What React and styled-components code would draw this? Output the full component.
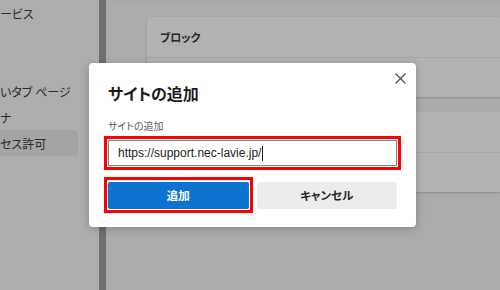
import React from 'react';
import styled, { createGlobalStyle } from 'styled-components';

const GlobalStyle = createGlobalStyle`
    html, body {
        margin: 0;
        padding: 0;
        background: #ababab;
    }
    * {
        box-sizing: border-box;
    }
`

const jp = `"Noto Sans CJK JP", "Liberation Sans", sans-serif`;

const Screen = styled.div`
    position: relative;
    width: 500px;
    height: 290px;
    overflow: hidden;
    display: flex;
    background: #ababab;
    font-family: ${jp};
    font-feature-settings: "palt" 1;
`

const Sidebar = styled.nav`
    width: 99px;
    display: flex;
    flex-direction: column;
    background: #adadad;
`

const NavItem = styled.div`
    height: 26px;
    width: 78px;
    display: flex;
    align-items: center;
    font-size: 12px;
    color: #2b2b2b;
    white-space: nowrap;
    border-radius: 0 4px 4px 0;
    background: ${p => p.$active ? '#a4a4a4' : 'transparent'};
`

const Scrollbar = styled.div`
    width: 7px;
    background: #6f6f6f;
`

const Main = styled.main`
    flex: 1;
    padding: 16px 0 0 41px;
    display: flex;
    flex-direction: column;
    gap: 15px;
    border-top: 1px solid #a6a6a6;
`

const Card = styled.section`
    background: #b2b2b2;
    border-radius: 4px 0 0 4px;
    box-shadow: 0 1px 2px rgba(0,0,0,.18);
`

const CardRow = styled.div`
    height: 40px;
    display: flex;
    align-items: center;
    padding-left: 13px;
    font-size: 11px;
    font-weight: 700;
    color: #262626;
    & + & {
        border-top: 1px solid #a7a7a7;
    }
`

const Overlay = styled.div`
    position: absolute;
    inset: 0;
    display: flex;
    align-items: center;
    justify-content: center;
    padding: 0 0 0 5px;
`

const Dialog = styled.div`
    position: relative;
    width: 327px;
    height: 164px;
    padding: 18px 15px 15px;
    background: #ffffff;
    border-radius: 4px;
    box-shadow: 0 2px 8px rgba(0,0,0,.22);
`

const Title = styled.h2`
    margin: 0 0 0 4px;
    font-size: 16px;
    line-height: 24px;
    font-weight: 700;
    color: #1b1b1b;
`

const CloseButton = styled.button`
    position: absolute;
    top: 9px;
    right: 10px;
    width: 12px;
    height: 12px;
    padding: 0;
    border: none;
    background: none;
    display: flex;
    align-items: center;
    justify-content: center;
`

const Label = styled.div`
    margin: 14px 0 0 4px;
    font-size: 10px;
    line-height: 14px;
    color: #5c5c5c;
`

const Highlight = styled.div`
    border: 3px solid #ff0000;
    padding: 1px;
`

const InputFrame = styled(Highlight)`
    margin-top: 3px;
`

const FakeInput = styled.div`
    height: 26px;
    border: 1px solid #858585;
    display: flex;
    align-items: center;
    padding-left: 9px;
    font-family: "Liberation Sans", sans-serif;
    font-size: 12px;
    color: #222;
`

const Caret = styled.span`
    display: inline-block;
    width: 1px;
    height: 15px;
    margin-left: 1px;
    background: #222;
`

const ButtonRow = styled.div`
    margin-top: 7px;
    display: grid;
    grid-template-columns: 1fr 1fr;
`

const CancelCell = styled.div`
    padding: 4px;
`

const Button = styled.button`
    width: 100%;
    height: 27px;
    border: none;
    border-radius: 2px;
    font-family: ${jp};
    font-feature-settings: "palt" 1;
    font-size: 11.5px;
    font-weight: 700;
    color: ${p => p.$primary ? '#ffffff' : '#262626'};
    background: ${p => p.$primary ? '#0b74d0' : '#ececec'};
`

const navItems = ['ービス', '', '', 'いタブ ページ', 'ナ', 'セス許可'];

export default function App() {
    return (
        <>
            <GlobalStyle />
            <Screen>
                <Sidebar>
                    {navItems.map((t, i) => (
                        <NavItem key={i} $active={i === 5}>{t}</NavItem>
                    ))}
                </Sidebar>
                <Scrollbar />
                <Main>
                    <Card>
                        <CardRow>ブロック</CardRow>
                        <CardRow />
                    </Card>
                    <Card>
                        <CardRow />
                        <CardRow />
                    </Card>
                </Main>

                <Overlay>
                    <Dialog>
                        <Title>サイトの追加</Title>
                        <CloseButton aria-label="close">
                            <svg width="11" height="11" viewBox="0 0 11 11">
                                <path d="M0.5 0.5 L10.5 10.5 M10.5 0.5 L0.5 10.5" stroke="#444" strokeWidth="1.1" fill="none" />
                            </svg>
                        </CloseButton>
                        <Label>サイトの追加</Label>
                        <InputFrame>
                            <FakeInput>
                                https://support.nec-lavie.jp/<Caret />
                            </FakeInput>
                        </InputFrame>
                        <ButtonRow>
                            <Highlight>
                                <Button $primary>追加</Button>
                            </Highlight>
                            <CancelCell>
                                <Button>キャンセル</Button>
                            </CancelCell>
                        </ButtonRow>
                    </Dialog>
                </Overlay>
            </Screen>
        </>
    )
}
